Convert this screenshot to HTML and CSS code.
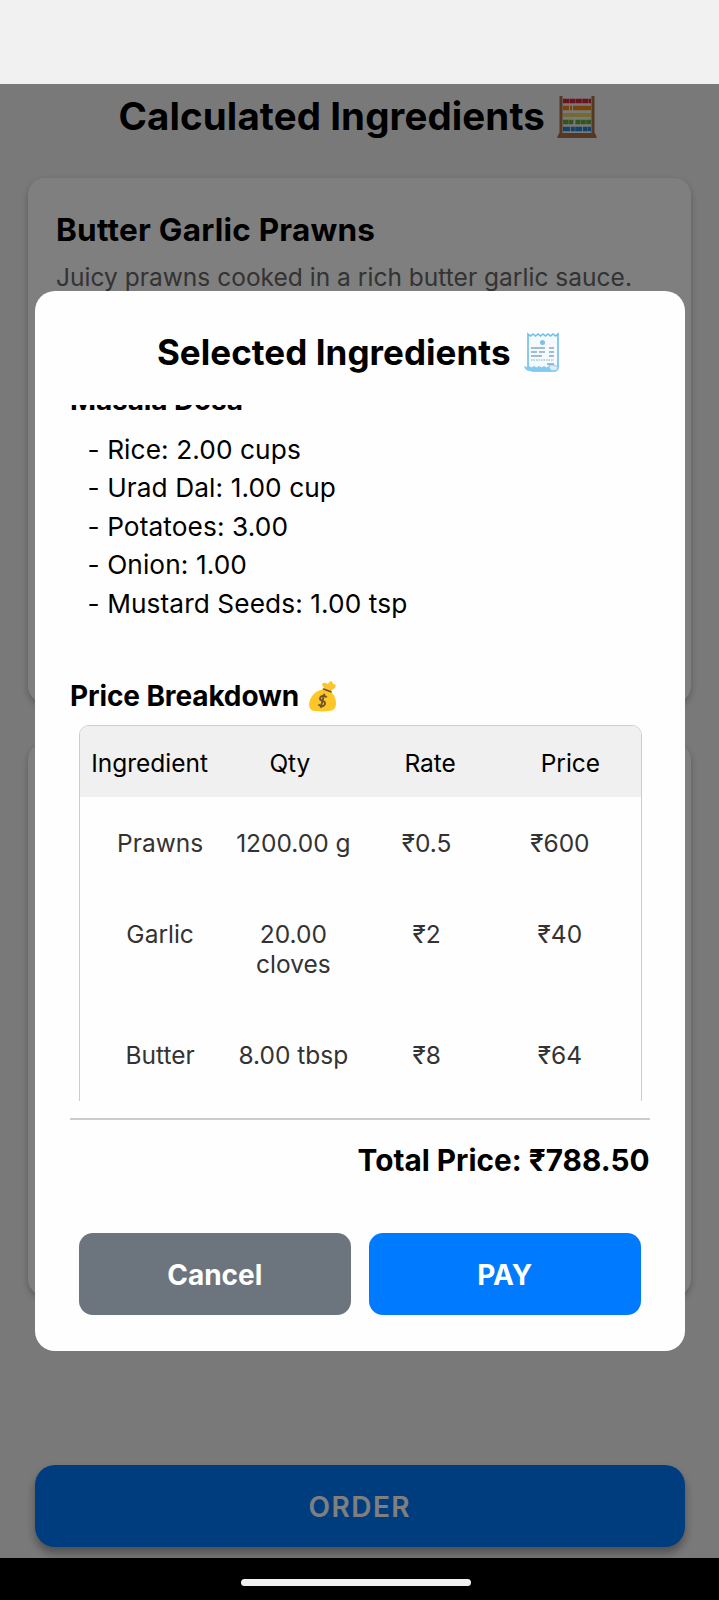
FILE: index.html
```html
<!DOCTYPE html>
<html lang="en">
<head>
<meta charset="utf-8">
<title>Calculated Ingredients</title>
<link rel="stylesheet" href="styles.css">
</head>
<body>
<div class="screen">
  <div class="status-bar"></div>
  <main class="page">
    <h1 class="page-title"><span>Calculated Ingredients</span>
      <svg class="abacus" viewBox="0 0 42 43">
        <path d="M5 1v38M37 1v38" stroke="#aa7049" stroke-width="3"/>
        <path d="M3 38h36l2 5H1z" fill="#aa7049"/>
        <g fill="none" stroke-width="4.500">
          <path d="M7 6h28" stroke="#d72638" stroke-dasharray="6 .4"/>
          <path d="M7 13h28" stroke="#ef8b13" stroke-dasharray="6 1 2 1 20"/>
          <path d="M7 20h28" stroke="#ead26d" stroke-width="4"/>
          <path d="M7 27h28" stroke="#68a83d" stroke-dasharray="5 .4 5 2 5 .4"/>
          <path d="M7 34h28" stroke="#2385d5" stroke-dasharray="7 .8 4 .4"/>
        </g>
      </svg>
    </h1>
    <section class="card card-first">
      <h2 class="dish">Butter Garlic Prawns</h2>
      <p class="dish-note">Juicy prawns cooked in a rich butter garlic sauce.</p>
    </section>
    <section class="card card-second"></section>
    <button class="order">ORDER</button>
  </main>
  <div class="nav-bar"><div class="handle"></div></div>

  <div class="overlay">
    <div class="modal">
      <h2 class="modal-title"><span>Selected Ingredients</span>
        <svg class="receipt" viewBox="0 0 38 40">
          <path d="M5 2l2.5 2L10 2l2.5 2L15 2l2.5 2L20 2l2.5 2L25 2l2.5 2L30 2l2.5 2L35 2v33q0 4-4 4H9L5 36z" fill="#f4fafd" stroke="#6fbde8" stroke-width="1.6"/>
          <path d="M1 34l2.500 1 2.500-1 2.500 1.500 2.500-1.500 2.500 1.500 2.500-1.500 2.500 1.500 2.500-1.500 2.500 1.500 2.500-1.500q0 4 4 5H7q-5 0-6-5z" fill="#82caf0"/>
          <path d="M26 33q0 6 5 6 4 0 4-4l-4-2z" fill="#d9eefa" stroke="#82caf0"/>
          <circle cx="19.500" cy="10.500" r="2.500" fill="#82bfe2"/>
          <path d="M8 16h14M26 16h5M8 20h6M16 20h6M26 20h5M8 24h11M26 24h5M24 32h7" stroke="#83a9bd" stroke-width="1.300"/>
          <path d="M8 28h23" stroke="#83a9bd" stroke-width="1.100" stroke-dasharray="1.500 1"/>
        </svg>
      </h2>
      <div class="scroll">
        <h3 class="section dosa">Masala Dosa</h3>
        <ul class="ingredients">
          <li>- Rice: 2.00 cups</li>
          <li>- Urad Dal: 1.00 cup</li>
          <li>- Potatoes: 3.00</li>
          <li>- Onion: 1.00</li>
          <li>- Mustard Seeds: 1.00 tsp</li>
        </ul>
        <h3 class="section breakdown"><span>Price Breakdown</span>
          <svg class="money" viewBox="0 0 30 33">
            <path d="M17 9L14 4q0-3 4-2l2 1 3-3q2 0 3 3 4 0 2 4l-5 4z" fill="#fbc62d"/>
            <path d="M16 9q4 0 8 3 5 5 5 12 0 8-8 8-7 1-14 0-7 0-7-7C1 16 8 9 16 9z" fill="#fdc827"/>
            <path d="M15.500 8.500l8 3" stroke="#6d4c35" stroke-width="1.800" stroke-linecap="round"/>
            <path d="M19 17.500q-3-3-6-1-3 3 1 4.500 4 1 3 4-2 4-7 0M16.500 13.500l-4 15" fill="none" stroke="#70512c" stroke-width="2"/>
          </svg>
        </h3>
        <div class="table">
          <div class="row head"><span>Ingredient</span><span>Qty</span><span>Rate</span><span>Price</span></div>
          <div class="row"><span>Prawns</span><span>1200.00 g</span><span>₹0.5</span><span>₹600</span></div>
          <div class="row"><span>Garlic</span><span>20.00<br>cloves</span><span>₹2</span><span>₹40</span></div>
          <div class="row"><span>Butter</span><span>8.00 tbsp</span><span>₹8</span><span>₹64</span></div>
        </div>
      </div>
      <div class="total">Total Price: ₹788.50</div>
      <div class="actions">
        <button class="btn cancel">Cancel</button>
        <button class="btn pay">PAY</button>
      </div>
    </div>
  </div>
</div>
</body>
</html>
```

FILE: styles.css
```css
* { box-sizing: border-box; }
body, h1, h2, h3, p, ul { margin: 0; padding: 0; }
body { font-family: Inter, sans-serif; color: #000; }
button { border: 0; padding: 0; font-family: inherit; }
svg { flex: none; display: block; }

.screen {
  position: relative;
  width: 719px;
  height: 1600px;
  overflow: hidden;
  display: flex;
  flex-direction: column;
  background: #f3f3f3;
}
.status-bar { height: 83.5px; flex: none; background: #f1f1f1; }
.page { height: 1474.5px; flex: none; padding: 0 28px; display: flex; flex-direction: column; background: #f3f3f3; }
.page-title {
  height: 66px;
  margin-bottom: 28.5px;
  padding-right: 2px;
  display: flex;
  align-items: center;
  justify-content: center;
  gap: 11.5px;
  font-size: 38.5px;
  letter-spacing: .09px;
  line-height: 47px;
}
.abacus { width: 42px; height: 43px; }
.card { flex: none; background: #fff; border-radius: 17px; box-shadow: 0 3px 7px rgba(0, 0, 0, .25); padding: 28px; }
.card-first { height: 525px; margin-bottom: 40px; }
.card-second { height: 553px; }
.dish { font-size: 31.5px; line-height: 48px; letter-spacing: .23px; }
.dish-note { font-size: 24.5px; line-height: 46px; letter-spacing: .02px; color: #666; white-space: nowrap; }
.order {
  flex: none;
  height: 82px;
  margin: 169px 6.5px 0 7px;
  padding-top: 2px;
  border-radius: 20px;
  background: #007bff;
  color: #fff;
  font-size: 28px;
  font-weight: 600;
  letter-spacing: 1.5px;
  box-shadow: 0 6px 10px rgba(0, 0, 0, .35);
}
.nav-bar { height: 42px; flex: none; display: flex; justify-content: center; padding: 21px 7px 0 0; background: #000; }
.handle { width: 230px; height: 7px; border-radius: 4px; background: #f1f1f1; }

/* Dimmed layer holding the dialog */
.overlay {
  position: absolute;
  inset: 83.5px 0 42px;
  padding: 207.5px 34.5px 0 35px;
  background: rgba(0, 0, 0, .5);
}
.modal { height: 1059.5px; padding: 35px; display: flex; flex-direction: column; background: #fefefe; border-radius: 20px; }
.modal-title {
  height: 52px;
  margin-bottom: 27px;
  padding-right: 2px;
  display: flex;
  align-items: center;
  justify-content: center;
  gap: 12px;
  font-size: 35px;
  letter-spacing: .05px;
  line-height: 42px;
}
.receipt { width: 38px; height: 40px; }
.scroll { height: 696px; flex: none; overflow: hidden; }
.section { font-size: 28px; line-height: 34px; letter-spacing: -.12px; }
.dosa { margin-top: -22px; }
.ingredients { list-style: none; padding: 14px 0 0 17.5px; margin-bottom: 53px; font-size: 26.25px; letter-spacing: .09px; line-height: 38.4px; white-space: nowrap; }
.breakdown { display: flex; align-items: center; gap: 10px; height: 40px; }
.money { width: 28px; height: 31px; }
.table {
  height: 460px;
  margin: 9px 8px 0 8.5px;
  border: 1.5px solid #ccc;
  border-radius: 10px;
  overflow: hidden;
}
.row { display: grid; grid-template-columns: repeat(4, 1fr); padding: 31px 14px 30px; font-size: 24.5px; line-height: 30px; text-align: center; color: #333; white-space: nowrap; }
.head { padding: 22px 0 19px; color: #000; background: #f0f0f0; }
.total { margin-top: 17px; border-top: 2px solid #ccc; padding-top: 22px; text-align: right; font-size: 29.75px; line-height: 36px; font-weight: 700; }
.actions { display: grid; grid-template-columns: 1fr 1fr; gap: 17.5px; margin: 55px 8.500px 0; }
.btn { height: 82px; padding-top: 2px; border-radius: 14px; color: #fff; font-size: 28px; font-weight: 700; }
.cancel { background: #6c757d; }
.pay { background: #007bff; }
```
